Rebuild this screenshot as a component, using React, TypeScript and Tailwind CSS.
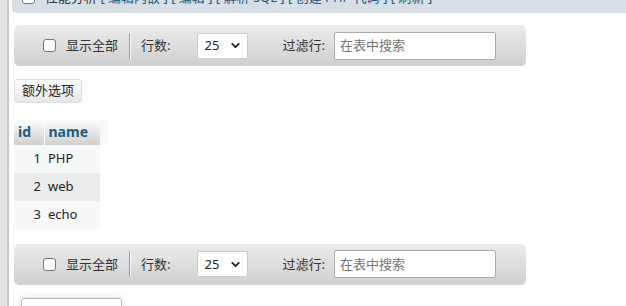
import { ChevronDown } from "lucide-react";

const font = { fontFamily: '"Segoe UI", "Noto Sans", "Noto Sans CJK SC", sans-serif' };

const rows = [
  { id: 1, name: "PHP" },
  { id: 2, name: "web" },
  { id: 3, name: "echo" },
];

function Box() {
  return (
    <span className="inline-block h-[13px] w-[13px] shrink-0 rounded-[3px] border border-[#767676] bg-white" />
  );
}

function NavBar() {
  return (
    <div className="flex h-[41px] w-[512px] items-center rounded-[5px] bg-gradient-to-b from-[#ececec] to-[#cfcfcf] text-[13px] text-[#333]">
      <div className="ml-[29px] flex items-center gap-[10px]">
        <Box />
        <span>显示全部</span>
      </div>
      <div className="ml-[11px] flex h-[26px] w-[2px]">
        <span className="w-px bg-[#999]" />
        <span className="w-px bg-[#f7f7f7]" />
      </div>
      <span className="ml-[10px]">行数:</span>
      <div className="ml-[26px] flex h-[26px] w-[51px] items-center justify-between rounded-[2px] border border-[#ccc] bg-white pl-[7px] pr-[5px] text-[#222]">
        <span>25</span>
        <ChevronDown size={13} strokeWidth={3.5} className="text-[#222]" />
      </div>
      <span className="ml-[35px]">过滤行:</span>
      <div className="ml-[9px] flex h-[28px] w-[162px] items-center rounded-[2px] border border-[#aaa] bg-white pl-[5px] text-[#757575]">
        在表中搜索
      </div>
    </div>
  );
}

export default function App() {
  return (
    <div className="flex h-[306px] w-[626px] overflow-hidden bg-white" style={font}>
      <div className="w-[7px] shrink-0 bg-[#e3e3e3]" />
      <div className="w-[2px] shrink-0 bg-[#c6c6c6]" />
      <div className="flex min-w-0 flex-1 flex-col [&>*]:shrink-0">
        {/* query actions bar, scrolled off the top */}
        <div className="ml-[3px] mt-[-18px] flex h-[31px] items-center gap-[10px] rounded-bl-[5px] bg-[#d6dee6] pl-[10px] text-[13px] text-[#333]">
          <Box />
          <span>
            性能分析{" "}
            <span className="text-[#235a81]">[ 编辑内嵌 ]</span>{" "}
            <span className="text-[#235a81]">[ 编辑 ]</span>{" "}
            <span className="text-[#235a81]">[ 解析 SQL ]</span>{" "}
            <span className="text-[#235a81]">[ 创建 PHP 代码 ]</span>{" "}
            <span className="text-[#235a81]">[ 刷新 ]</span>
          </span>
        </div>

        <div className="ml-[5px] mt-[12px]">
          <NavBar />
        </div>

        <div className="ml-[5px] mt-[11px]">
          <button className="h-[24px] rounded-[3px] border border-[#ddd] bg-gradient-to-b from-white to-[#e6e6e6] px-[7px] text-[13px] text-[#222]">
            额外选项
          </button>
        </div>

        <div className="ml-[5px] mt-[16px] flex">
          <table className="border-collapse text-[13px] text-[#222]">
            <thead>
              <tr className="h-[26px] bg-gradient-to-b from-white to-[#cfcfcf] text-left text-[14px] font-bold text-[#235a81]">
                <th className="w-[30px] border-r border-white pl-[4px]">id</th>
                <th className="w-[56px] pl-[4px]">name</th>
              </tr>
            </thead>
            <tbody>
              {rows.map((r, i) => (
                <tr key={r.id} className={`h-[28px] ${i % 2 ? "bg-[#e9ebec]" : "bg-[#f7f8f9]"}`}>
                  <td className="pr-[3px] text-right">{r.id}</td>
                  <td className="pl-[4px]">{r.name}</td>
                </tr>
              ))}
            </tbody>
          </table>
          <div className="h-[26px] w-[8px] bg-[#f6f7f8]" />
        </div>

        <div className="ml-[5px] mt-[15px]">
          <NavBar />
        </div>

        <div className="ml-[12px] mt-[13px] h-[20px] w-[101px] rounded-t-[3px] border border-[#bbb] bg-white shadow-[0_0_8px_rgba(0,0,0,0.15)]" />
      </div>
    </div>
  );
}
